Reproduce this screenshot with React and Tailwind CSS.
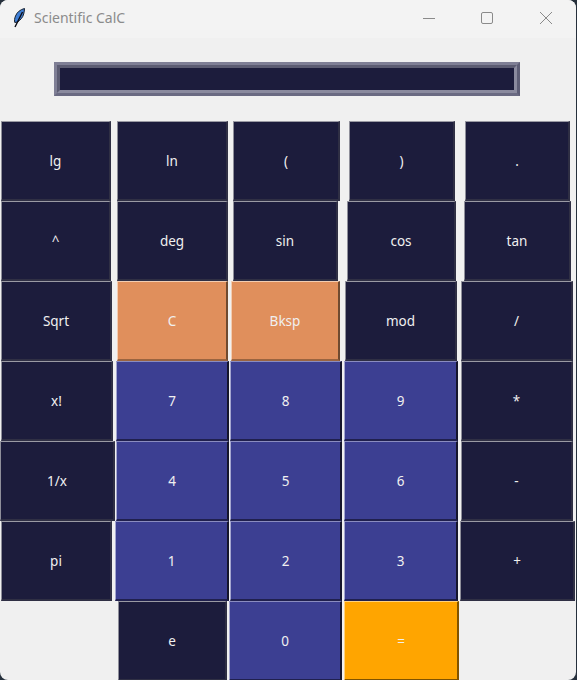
const FONT = "font-['Noto_Sans','Open_Sans',sans-serif]";

const dark = "bg-[#1c1c3c] border-t-[#9a9aa4] border-l-[#8f8f9a] border-r-[#2f2f44] border-b-[#2f2f44]";
const blue = "bg-[#3c3f92] border-t-[#8a8cc0] border-l-[#a4a6cf] border-r-[#15152c] border-b-[#20204e]";
const peach = "bg-[#e08f5c] border-t-[#f3cdb2] border-l-[#f3cdb2] border-r-[#6f4a30] border-b-[#9a6440]";
const amber = "bg-[#ffa500] border-t-[#ffd27f] border-l-[#ffd27f] border-r-[#7f5300] border-b-[#7f5300]";

function Key({ label, tone, box }) {
  return (
    <button className={`flex h-[80px] shrink-0 items-center justify-center border-t border-l border-r-2 border-b-2 pt-[1px] text-[13.5px] text-[#f0f0f0] ${tone} ${box}`}>
      {label}
    </button>
  );
}

function Feather() {
  return (
    <svg width="12" height="20" viewBox="0 0 12 20" className="ml-[2px] mr-[-1px] shrink-0">
      <path d="M11.500 0.500C7.500 1.500 4 4 2.500 8C1.500 10.500 1.300 12.500 1.800 14.500L4.500 14C7.500 12 9.800 9.500 10.700 6C11.200 4 11.500 2 11.500 0.500Z" fill="#3f7fd6" stroke="#16202e" strokeWidth="1" />
      <path d="M9.500 4L2 19" stroke="#0c0c14" strokeWidth="1.400" fill="none" />
    </svg>
  );
}

export default function App() {
  return (
    <div className={`h-[680px] w-[577px] overflow-hidden bg-[#26303c] ${FONT}`}>
      <div className="h-[680px] w-[576px] overflow-hidden rounded-[8px] bg-[#f0f0f0]">
        <header className="flex h-[38px] items-center bg-[#f3f3f3] pb-[3px] pl-[11px]">
          <Feather />
          <span className="ml-[10px] text-[14px] text-[#8b8b8b]">Scientific CalC</span>
          <div className="ml-auto flex items-center text-[#8a8a8a]">
            <svg width="14" height="14" viewBox="0 0 14 14" className="mr-[44px]"><path d="M1 7.500H13" stroke="currentColor" strokeWidth="1" /></svg>
            <svg width="14" height="14" viewBox="0 0 14 14" className="mr-[45px]"><rect x="1.500" y="1.500" width="11" height="11" rx="1.500" fill="none" stroke="currentColor" strokeWidth="1" /></svg>
            <svg width="14" height="14" viewBox="0 0 14 14" className="mr-[23px]"><path d="M1 1L13 13M13 1L1 13" stroke="currentColor" strokeWidth="1" /></svg>
          </div>
        </header>

        <div className="mt-[24px] ml-[54px] h-[34px] w-[466px] border-[3px] border-t-[#7f7f95] border-l-[#7f7f95] border-r-[#5e5e76] border-b-[#6a6a82]">
          <div className="h-full w-full border-[3px] border-t-[#5c5c72] border-l-[#5c5c72] border-r-[#8a8a9e] border-b-[#8a8a9e] bg-[#1c1c3c]" />
        </div>

        <div className="mt-[25px] flex flex-col">
          <div className="flex">
            <Key label="lg" tone={dark} box="ml-[1px] w-[110px]" />
            <Key label="ln" tone={dark} box="ml-[6px] w-[111px]" />
            <Key label="(" tone={dark} box="ml-[5px] w-[107px]" />
            <Key label=")" tone={dark} box="ml-[9px] w-[106px]" />
            <Key label="." tone={dark} box="ml-[10px] w-[105px]" />
          </div>
          <div className="flex">
            <Key label="^" tone={dark} box="ml-[1px] w-[110px]" />
            <Key label="deg" tone={dark} box="ml-[6px] w-[111px]" />
            <Key label="sin" tone={dark} box="ml-[5px] w-[105px]" />
            <Key label="cos" tone={dark} box="ml-[9px] w-[109px]" />
            <Key label="tan" tone={dark} box="ml-[8px] w-[107px]" />
          </div>
          <div className="flex">
            <Key label="Sqrt" tone={dark} box="ml-[1px] w-[111px]" />
            <Key label="C" tone={peach} box="ml-[5px] w-[111px]" />
            <Key label="Bksp" tone={peach} box="ml-[3px] w-[109px]" />
            <Key label="mod" tone={dark} box="ml-[5px] w-[112px]" />
            <Key label="/" tone={dark} box="ml-[4px] w-[112px]" />
          </div>
          <div className="flex">
            <Key label="x!" tone={dark} box="ml-[1px] w-[112px]" />
            <Key label="7" tone={blue} box="ml-[3px] w-[113px]" />
            <Key label="8" tone={blue} box="ml-[1px] w-[112px]" />
            <Key label="9" tone={blue} box="ml-[2px] w-[114px]" />
            <Key label="*" tone={dark} box="ml-[3px] w-[112px]" />
          </div>
          <div className="flex">
            <Key label="1/x" tone={dark} box="w-[115px]" />
            <Key label="4" tone={blue} box="ml-[1px] w-[113px]" />
            <Key label="5" tone={blue} box="ml-[1px] w-[112px]" />
            <Key label="6" tone={blue} box="ml-[2px] w-[114px]" />
            <Key label="-" tone={dark} box="ml-[3px] w-[112px]" />
          </div>
          <div className="flex">
            <Key label="pi" tone={dark} box="ml-[1px] w-[111px]" />
            <Key label="1" tone={blue} box="ml-[3px] w-[114px]" />
            <Key label="2" tone={blue} box="ml-[1px] w-[112px]" />
            <Key label="3" tone={blue} box="ml-[2px] w-[114px]" />
            <Key label="+" tone={dark} box="ml-[2px] w-[115px]" />
          </div>
          <div className="flex">
            <Key label="e" tone={dark} box="ml-[118px] w-[109px]" />
            <Key label="0" tone={blue} box="ml-[2px] w-[113px]" />
            <Key label="=" tone={amber} box="ml-[2px] w-[115px]" />
          </div>
        </div>
      </div>
    </div>
  );
}
